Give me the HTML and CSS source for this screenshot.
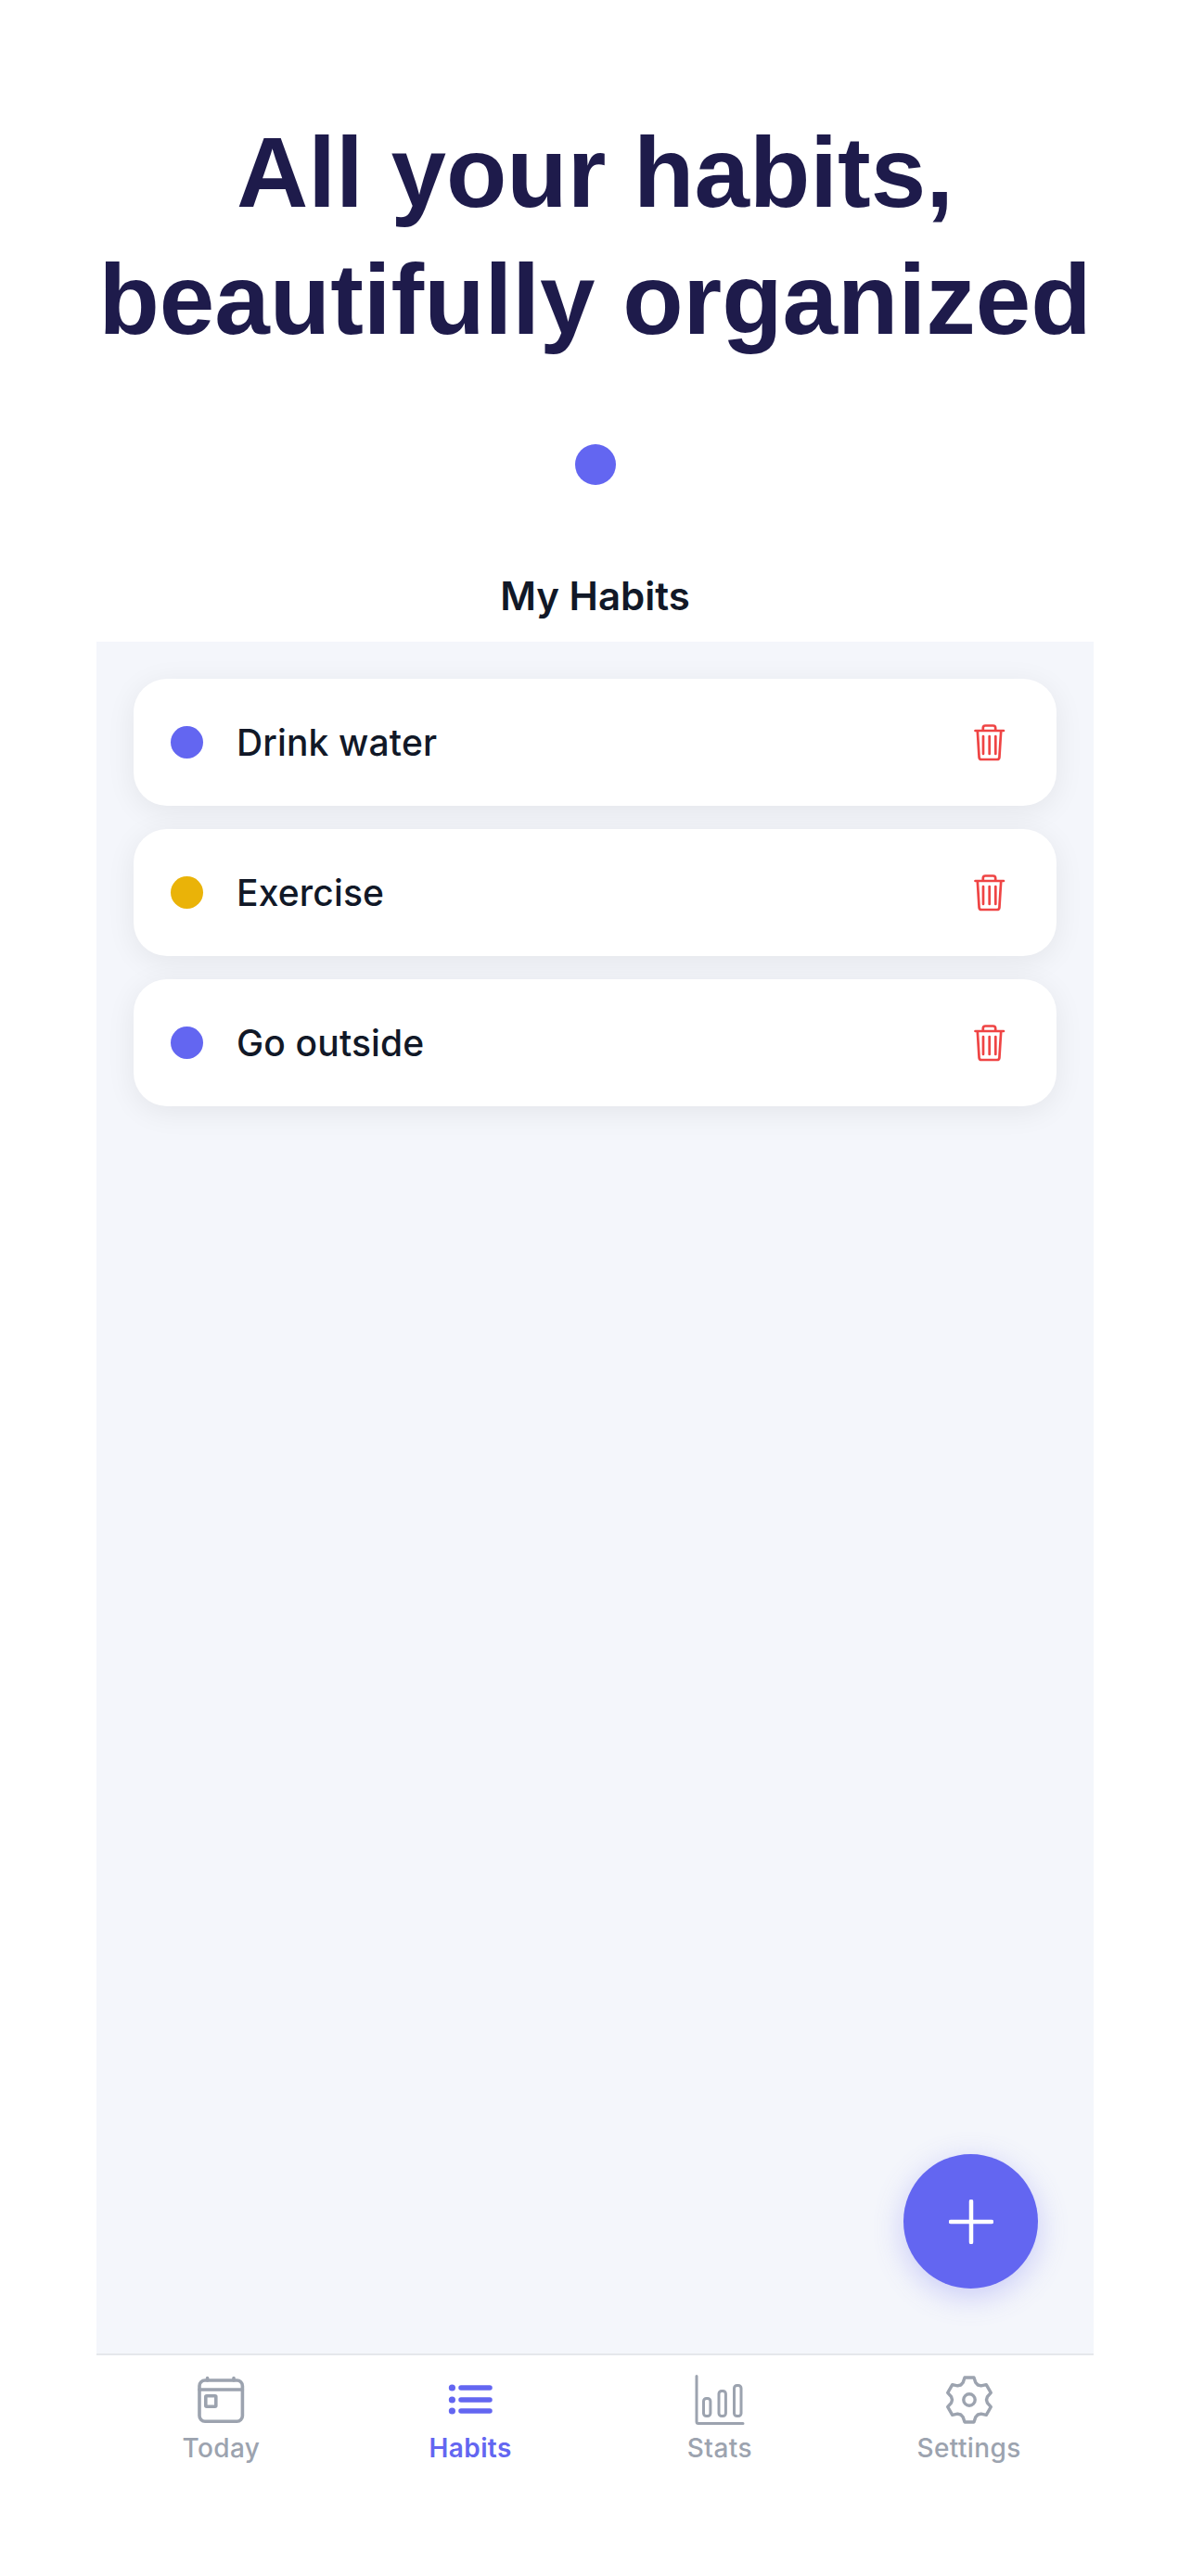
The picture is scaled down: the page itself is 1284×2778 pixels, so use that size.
FILE: index.html
```html
<!DOCTYPE html>
<html lang="en">
<head>
    <meta charset="UTF-8">
    <meta name="viewport" content="width=device-width, initial-scale=1.0">
    <title>My Habits</title>
    <link rel="stylesheet" href="styles.css">
</head>
<body>
    <div class="screen">
        <h1 class="headline">All your habits,<br>beautifully organized</h1>
        <div class="pager-dot"></div>
        <h2 class="page-title">My Habits</h2>

        <main class="panel">
            <div class="habit">
                <span class="habit-dot dot-indigo"></span>
                <span class="habit-name">Drink water</span>
                <svg class="trash" viewBox="0 0 34 40" fill="none" stroke="#ef4444" stroke-width="2.7" stroke-linecap="round" stroke-linejoin="round">
                    <path d="M1.5 7h30.5M9.8 7V4a2.5 2.5 0 0 1 2.5-2.5h8.4a2.5 2.5 0 0 1 2.5 2.5v3M3.8 7l1.8 28.8a2.5 2.5 0 0 0 2.5 2.2h16.8a2.5 2.5 0 0 0 2.5-2.2L29.2 7M10 13v19M16.7 13v19M23.3 13v19"/>
                </svg>
            </div>
            <div class="habit">
                <span class="habit-dot dot-yellow"></span>
                <span class="habit-name">Exercise</span>
                <svg class="trash" viewBox="0 0 34 40" fill="none" stroke="#ef4444" stroke-width="2.7" stroke-linecap="round" stroke-linejoin="round">
                    <path d="M1.5 7h30.5M9.8 7V4a2.5 2.5 0 0 1 2.5-2.5h8.4a2.5 2.5 0 0 1 2.5 2.5v3M3.8 7l1.8 28.8a2.5 2.5 0 0 0 2.5 2.2h16.8a2.5 2.5 0 0 0 2.5-2.2L29.2 7M10 13v19M16.7 13v19M23.3 13v19"/>
                </svg>
            </div>
            <div class="habit">
                <span class="habit-dot dot-indigo"></span>
                <span class="habit-name">Go outside</span>
                <svg class="trash" viewBox="0 0 34 40" fill="none" stroke="#ef4444" stroke-width="2.7" stroke-linecap="round" stroke-linejoin="round">
                    <path d="M1.5 7h30.5M9.8 7V4a2.5 2.5 0 0 1 2.5-2.5h8.4a2.5 2.5 0 0 1 2.5 2.5v3M3.8 7l1.8 28.8a2.5 2.5 0 0 0 2.5 2.2h16.8a2.5 2.5 0 0 0 2.5-2.2L29.2 7M10 13v19M16.7 13v19M23.3 13v19"/>
                </svg>
            </div>

            <button class="fab" type="button" aria-label="Add habit">
                <svg viewBox="0 0 48 48" fill="none" stroke="#fff" stroke-width="4.5" stroke-linecap="round">
                    <path d="M24 2v44M2 24h44"/>
                </svg>
            </button>
        </main>

        <nav class="tabbar">
            <div class="tab">
                <svg class="tab-icon" viewBox="0 0 56 56" fill="none" stroke="currentColor" stroke-width="3.6" stroke-linecap="round" stroke-linejoin="round">
                    <rect x="5" y="7" width="46.4" height="44.2" rx="6"/>
                    <path d="M5 17h46.4M13.6 4.5V7M42 4.5V7"/>
                    <rect x="11.8" y="23.8" width="11" height="11.4" rx="1"/>
                </svg>
                <span>Today</span>
            </div>
            <div class="tab tab-active">
                <svg class="tab-icon" viewBox="0 0 56 56" fill="none" stroke="currentColor" stroke-width="5.5" stroke-linecap="round">
                    <path d="M18 15h31M18 28h31M18 40h31"/>
                    <circle cx="8.4" cy="15" r="3.6" fill="currentColor" stroke="none"/>
                    <circle cx="8.4" cy="28" r="3.6" fill="currentColor" stroke="none"/>
                    <circle cx="8.4" cy="40" r="3.6" fill="currentColor" stroke="none"/>
                </svg>
                <span>Habits</span>
            </div>
            <div class="tab">
                <svg class="tab-icon" viewBox="0 0 56 56" fill="none" stroke="currentColor" stroke-width="3" stroke-linecap="round" stroke-linejoin="round">
                    <path d="M3 2.5V51.5a2 2 0 0 0 2 2h48"/>
                    <rect x="10.5" y="26.5" width="7.4" height="19" rx="3"/>
                    <rect x="27" y="18.5" width="7.4" height="27" rx="3"/>
                    <rect x="43.5" y="12.5" width="7.5" height="33" rx="3"/>
                </svg>
                <span>Stats</span>
            </div>
            <div class="tab">
                <svg class="tab-icon" viewBox="0 0 56 56" fill="none" stroke="currentColor" stroke-width="3.4" stroke-linecap="round" stroke-linejoin="round">
                    <polygon points="21.2,9.4 23,4 33,4 34.8,9.4 37.25,12 40.71,12.81 46.28,11.67 51.28,20.33 47.51,24.59 46.48,28 47.51,31.41 51.28,35.67 46.28,44.33 40.71,43.19 37.23,44.01 34.8,46.6 33,52 23,52 21.2,46.6 18.75,44 15.29,43.19 9.72,44.33 4.72,35.67 8.49,31.41 9.52,28 8.49,24.59 4.72,20.33 9.72,11.67 15.29,12.81 18.77,11.99"/>
                    <circle cx="28" cy="28" r="6.2"/>
                </svg>
                <span>Settings</span>
            </div>
        </nav>
    </div>
</body>
</html>
```

FILE: styles.css
```css
* {
    box-sizing: border-box;
}

body {
    margin: 0;
    background-color: #fff;
    font-family: Inter, "Liberation Sans", sans-serif;
}

.screen {
    width: 1284px;
    height: 2778px;
    padding: 0 105px 0 104px;
    display: flex;
    flex-direction: column;
}

.headline {
    margin: 118px -60px 0;
    font-family: "Liberation Sans", Arial, sans-serif;
    font-size: 107px;
    font-weight: 700;
    line-height: 137px;
    text-align: center;
    color: #1e1b4b;
}

.pager-dot {
    width: 44px;
    height: 44px;
    margin: 87px auto 0;
    border-radius: 50%;
    background-color: #6366f1;
}

.page-title {
    margin: 95px 0 0;
    height: 74px;
    font-size: 42px;
    font-weight: 600;
    line-height: 50px;
    text-align: center;
    color: #111827;
}

.panel {
    position: relative;
    height: 1848px;
    padding: 40px;
    display: flex;
    flex-direction: column;
    gap: 25px;
    background-color: #f4f6fb;
    border-bottom: 2px solid #e5e7eb;
}

.habit {
    height: 137px;
    padding: 0 40px;
    display: flex;
    align-items: center;
    background-color: #fff;
    border-radius: 36px;
    box-shadow: 0 6px 32px rgba(0, 0, 0, 0.07);
}

.habit-dot {
    width: 35px;
    height: 35px;
    margin-right: 36px;
    border-radius: 50%;
}

.dot-indigo {
    background-color: #6366f1;
}

.dot-yellow {
    background-color: #eab308;
}

.habit-name {
    flex: 1;
    font-size: 39px;
    font-weight: 550;
    letter-spacing: 0.15px;
    color: #111827;
}

.trash {
    width: 34px;
    height: 40px;
    margin-right: 15px;
}

.fab {
    position: absolute;
    right: 60px;
    bottom: 70px;
    width: 145px;
    height: 145px;
    padding: 0;
    display: flex;
    align-items: center;
    justify-content: center;
    background-color: #6366f1;
    border: none;
    border-radius: 50%;
    box-shadow: 0 8px 32px rgba(99, 102, 241, 0.3);
}

.fab svg {
    width: 48px;
    height: 48px;
}

.tabbar {
    display: grid;
    grid-template-columns: repeat(4, 1fr);
    padding-top: 20px;
}

.tab {
    display: flex;
    flex-direction: column;
    align-items: center;
    font-size: 28px;
    font-weight: 500;
    letter-spacing: 0.4px;
    line-height: 34px;
    color: #9ca3af;
}

.tab-active {
    font-weight: 600;
    color: #6366f1;
}

.tab-icon {
    width: 56px;
    height: 56px;
    margin-bottom: 7px;
}
```
